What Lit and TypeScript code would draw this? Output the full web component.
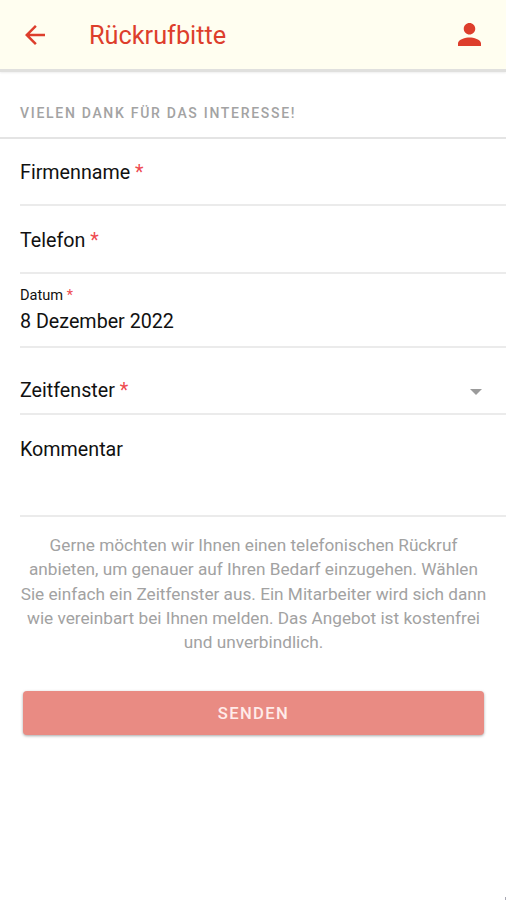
import { LitElement, html, css } from "lit";
import { customElement } from "lit/decorators.js";

@customElement("app-root")
export class AppRoot extends LitElement {
  static styles = css`
    :host { display: block; position: relative; height: 900px; background: #fff; overflow: hidden; font-family: Roboto, sans-serif; color: #111; }
    * { box-sizing: border-box; }
    header { height: 69px; background: #fffef0; display: flex; align-items: center; padding: 0 25px; box-shadow: 0 3px 0 #e0e0de, 0 4px 2px #eee; color: #dd3e2c; }
    header svg { display: block; fill: currentColor; }
    h1 { margin: 2px 0 0 44px; flex: 1; font-size: 25.3px; line-height: 32px; font-weight: 400; }
    .caption { height: 70px; padding: 35px 20px 0; border-bottom: 2px solid #e4e4e4; font-size: 14px; line-height: 18px; font-weight: 500; letter-spacing: 1.7px; color: #a3a3a3; }
    .field { margin-left: 20px; border-bottom: 2px solid #ebebeb; font-size: 19.7px; line-height: 24px; }
    .star { color: #ee4b50; }
    .text { height: 67px; padding-top: 22px; }
    .text + .text { height: 68px; padding-top: 23px; }
    .date { height: 74px; padding-top: 12px; }
    .small { margin-bottom: 6px; font-size: 14.6px; line-height: 18px; }
    .select { height: 67px; padding: 31px 24px 0 0; display: flex; justify-content: space-between; }
    .arrow { margin-top: 10px; width: 12px; height: 6px; background: #9b9b9b; clip-path: polygon(0 0, 100% 0, 50% 100%); }
    .comment { height: 102px; padding-top: 23px; }
    .info { margin: 16px 0 0 1px; text-align: center; font-size: 17.22px; line-height: 24.3px; color: #a2a2a2; }
    button { display: block; margin: 37px 22px 0 23px; width: 461px; height: 44px; padding: 0; border: 0; border-radius: 4px; background: #e98b83; color: #ffebe9; font: 500 16.6px Roboto, sans-serif; letter-spacing: 1.35px; box-shadow: 0 1px 3px rgba(0,0,0,.35); }
    .corner { position: absolute; right: 0; bottom: 0; width: 1px; height: 3px; background: #a9a9b4; }
  `;
  render() {
    const star = html`<span class="star">*</span>`;
    return html`
      <header>
        <svg width="20" height="20" viewBox="4 4 16 16"><path d="M20 11H7.83l5.59-5.59L12 4l-8 8 8 8 1.41-1.41L7.83 13H20v-2z"/></svg>
        <h1>Rückrufbitte</h1>
        <svg width="23" height="23" viewBox="4 4 16 16"><path d="M12 12c2.21 0 4-1.79 4-4s-1.79-4-4-4-4 1.79-4 4 1.79 4 4 4zm0 2c-2.67 0-8 1.34-8 4v2h16v-2c0-2.66-5.33-4-8-4z"/></svg>
      </header>
      <div class="caption">VIELEN DANK FÜR DAS INTERESSE!</div>
      <div class="field text">Firmenname ${star}</div>
      <div class="field text">Telefon ${star}</div>
      <div class="field date"><div class="small">Datum ${star}</div><div>8 Dezember 2022</div></div>
      <div class="field select"><span>Zeitfenster ${star}</span><span class="arrow"></span></div>
      <div class="field comment">Kommentar</div>
      <p class="info">Gerne möchten wir Ihnen einen telefonischen Rückruf<br>anbieten, um genauer auf Ihren Bedarf einzugehen. Wählen<br>Sie einfach ein Zeitfenster aus. Ein Mitarbeiter wird sich dann<br>wie vereinbart bei Ihnen melden. Das Angebot ist kostenfrei<br>und unverbindlich.</p>
      <button>SENDEN</button>
      <span class="corner"></span>
    `;
  }
}
